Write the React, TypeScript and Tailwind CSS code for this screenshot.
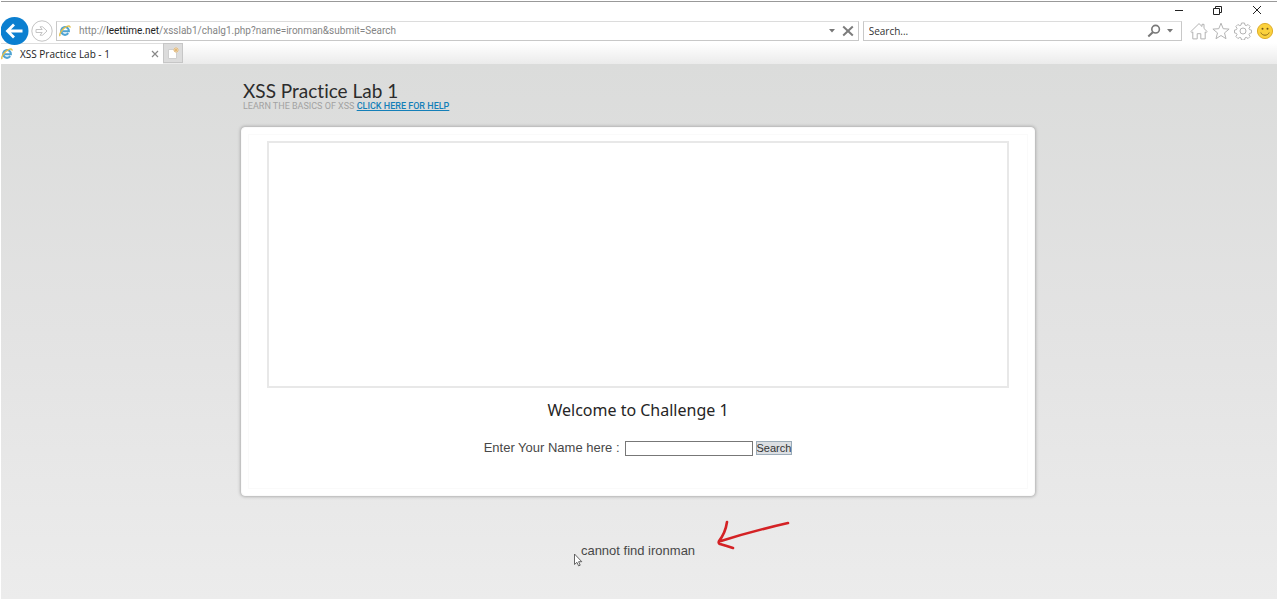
import React from "react";

function BrowserLogo() {
  return (
    <svg width="12" height="12" viewBox="0 0 12 12" aria-hidden="true" className="shrink-0">
      <path d="M9.2 8.2A3.9 3.9 0 1 1 9.9 6.3H3.4" fill="none" stroke="#4fa3d2" strokeWidth="2.1" />
      <path d="M1.1 11.2C-.4 9 3.6 3.3 8 1.4c2.2-.9 3.3-.4 3 1.3" fill="none" stroke="#e3c04a" strokeWidth="1.4" />
    </svg>
  );
}

function WindowControls() {
  return (
    <div className="flex h-[19px] items-end justify-end gap-[26px] pr-3 text-[#222]">
      <button aria-label="Minimize" className="flex h-4 w-3 items-center justify-center pb-1">
        <svg width="12" height="12" viewBox="0 0 12 12">
          <path d="M2 5.500h8" stroke="currentColor" />
        </svg>
      </button>
      <button aria-label="Restore" className="flex h-4 w-3 items-center justify-center pb-1">
        <svg width="12" height="12" viewBox="0 0 12 12" fill="none" stroke="currentColor">
          <path d="M2.500 3.500h6v6h-6zM4.500 3.500v-2h6v6h-2" />
        </svg>
      </button>
      <button aria-label="Close" className="flex h-4 w-4 items-center justify-center pb-1">
        <svg width="12" height="12" viewBox="0 0 12 12">
          <path d="m2 1 8 8M10 1l-8 8" stroke="currentColor" />
        </svg>
      </button>
    </div>
  );
}

function Toolbar() {
  return (
    <div className="flex h-[20px] items-center">
      <button aria-label="Back" className="relative z-10 h-[28px] w-[28px] shrink-0">
        <svg width="28" height="28" viewBox="0 0 28 28">
          <circle cx="13.5" cy="14" r="14" fill="#0b7fd0" />
          <path d="M21.500 14H7M13 7.500 6.500 14l6.500 6.500" fill="none" stroke="#fff" strokeWidth="2.800" />
        </svg>
      </button>
      <button aria-label="Forward" className="ml-[2px] h-[22px] w-[22px] shrink-0">
        <svg width="22" height="22" viewBox="0 0 22 22" fill="none" stroke="#c4c4c4">
          <circle cx="11" cy="11" r="10.200" fill="#fff" />
          <path d="M5 9.500h6.200L9 6.800h2.600l4.400 4.200-4.400 4.200H9l2.200-2.700H5z" />
        </svg>
      </button>
      <div className="ml-[3px] flex h-full min-w-0 flex-[803] items-center border border-[#c8c8c8] border-t-[#dcdcdc] bg-white pl-[2px]">
        <BrowserLogo />
        <div aria-label="Address" className="ml-2 min-w-0 flex-1 truncate font-['Roboto',sans-serif] text-[10px] leading-4 text-[#858585]">
          http://<span className="text-[#222]">leettime.net</span>/xsslab1/chalg1.php?name=ironman&amp;submit=Search
        </div>
        <button aria-label="Show address list" className="flex h-4 w-4 items-center justify-center">
          <svg width="6" height="4" viewBox="0 0 6 4"><path d="M0 0h6L3 3.500z" fill="#777" /></svg>
        </button>
        <button aria-label="Stop" className="mr-[2px] flex h-4 w-4 items-center justify-center">
          <svg width="12" height="12" viewBox="0 0 12 12"><path d="m1.200 1.500 9.600 9M10.800 1.500l-9.600 9" stroke="#7c7c7c" strokeWidth="2" /></svg>
        </button>
      </div>
      <div className="ml-1 flex h-full min-w-0 flex-[319] items-center border border-[#c8c8c8] border-t-[#dcdcdc] bg-white">
        <input
          aria-label="Search the web"
          placeholder="Search..."
          className="h-4 min-w-0 flex-1 bg-transparent pl-[5px] text-[10px] leading-4 outline-none placeholder:text-[#333]"
        />
        <button aria-label="Search" className="flex h-4 w-4 items-center justify-center">
          <svg width="14" height="14" viewBox="0 0 14 14" fill="none" stroke="#777">
            <circle cx="8.600" cy="5.200" r="3.800" strokeWidth="1.600" />
            <path d="M5.800 8.200 1.300 12.500" strokeWidth="2" />
          </svg>
        </button>
        <button aria-label="Search options" className="mr-[3px] flex h-4 w-4 items-center justify-center">
          <svg width="6" height="4" viewBox="0 0 6 4"><path d="M0 0h6L3 3.500z" fill="#777" /></svg>
        </button>
      </div>
      <div className="ml-2 flex shrink-0 items-center gap-1 pr-[3px]">
        <button aria-label="Home" className="h-[18px] w-[18px]">
          <svg width="18" height="18" viewBox="0 0 18 18" fill="none" stroke="#b3b3b3">
            <path d="m.8 9.600 8.200-8 3 2.900V2.300h2v4.200l3.200 3.100-1.100 1.100-.9-.8v7h-4.400v-5.200H7.200v5.200H2.800v-7l-.9.8z" />
          </svg>
        </button>
        <button aria-label="Favorites" className="h-[18px] w-[18px]">
          <svg width="18" height="18" viewBox="0 0 18 18" fill="none" stroke="#b3b3b3">
            <path d="m9 1.200 2.200 5.500 5.900.4-4.600 3.800 1.500 5.800L9 13.500l-5 3.200 1.500-5.800L.9 7.100l5.900-.4z" />
          </svg>
        </button>
        <button aria-label="Tools" className="h-[18px] w-[18px]">
          <svg width="18" height="18" viewBox="0 0 18 18" fill="none" stroke="#b3b3b3">
            <circle cx="9" cy="9" r="3" />
            <path d="M7.500 1h3l.5 2.100 1.200.5 1.900-1.100 2 2-1.100 1.900.5 1.200 2 .5v2.800l-2 .5-.5 1.200 1.100 1.900-2 2-1.900-1.100-1.200.5-.5 2.100h-3L7 15.900l-1.200-.5-1.900 1.100-2-2L3 12.600l-.5-1.200-2-.5V8.100l2-.5L3 6.400 1.900 4.500l2-2 1.900 1.100L7 3.100z" />
          </svg>
        </button>
        <button aria-label="Send a smile" className="h-[18px] w-[18px]">
          <svg width="18" height="18" viewBox="0 0 18 18">
            <circle cx="9" cy="9" r="7.600" fill="#fbd13c" stroke="#dfae2c" />
            <circle cx="6.500" cy="6.700" r="1" fill="#735618" />
            <circle cx="11.500" cy="6.700" r="1" fill="#735618" />
            <path d="M4.800 10.500c1.500 3.600 6.900 3.600 8.400 0" fill="none" stroke="#8c6a1d" />
          </svg>
        </button>
      </div>
    </div>
  );
}

function TabStrip() {
  return (
    <div className="mt-[2px] flex h-[21px] bg-linear-to-b from-white to-[#ebebeb]">
      <div className="flex w-[162px] items-center border-t border-[#dedede] bg-white">
        <BrowserLogo />
        <span className="ml-[7px] flex-1 text-[10px] leading-4 text-[#222]">XSS Practice Lab - 1</span>
        <button aria-label="Close tab" className="mr-[2px] flex h-3 w-3 items-center justify-center">
          <svg width="8" height="8" viewBox="0 0 8 8"><path d="m1 1 6 6M7 1 1 7" stroke="#888" strokeWidth="1.200" /></svg>
        </button>
      </div>
      <button aria-label="New tab" className="flex h-5 w-5 items-center justify-center border border-[#c6c6c6] bg-[#dcdcdc]">
        <svg width="12" height="12" viewBox="0 0 12 12">
          <path d="M1.500 2.500h5l3 3v6h-8z" fill="#fff" stroke="#cfcfcf" />
          <path d="M9 0v6M6 3h6M7 1l4 4M11 1 7 5" stroke="#eeb765" strokeWidth=".8" />
        </svg>
      </button>
    </div>
  );
}

function Annotation() {
  return (
    <svg width="76" height="34" viewBox="0 0 76 34" aria-hidden="true" className="absolute -top-[22px] left-full ml-[21px]">
      <path d="M72 4C50 9 27 15 5 22M11 3C10 10 7 17 3 22q-1 2 1 3 7 2 13 4" fill="none" stroke="#d42225" strokeWidth="2.600" strokeLinecap="round" strokeLinejoin="round" />
    </svg>
  );
}

function Pointer() {
  return (
    <svg width="10" height="14" viewBox="0 0 10 14" aria-hidden="true" className="absolute top-3 -left-2">
      <path d="M1.500 1v10.500l2.400-2.200 1.700 3.600 1.600-.7-1.600-3.500h3.200z" fill="#fff" stroke="#555" strokeWidth=".9" />
    </svg>
  );
}

export default function App() {
  return (
    <div className="flex min-h-screen flex-col bg-white px-px pb-px font-['Open_Sans','Noto_Sans',sans-serif]">
      <header className="mt-px border-t border-[#999]">
        <WindowControls />
        <Toolbar />
        <TabStrip />
      </header>
      <main className="flex-1 bg-linear-to-b from-[#dbdcdb] via-[#e3e3e3] to-[#ececec] pr-[18px] pl-4 font-['Liberation_Sans',Arial,sans-serif] text-[#484848]">
        <div className="mx-auto max-w-[794px] pt-[17px]">
          <div className="pl-[2px]">
            <h1 className="font-['Trebuchet_MS','Lato',sans-serif] text-[19px] leading-5 text-[#2c2c2c] [font-variant-ligatures:none]">
              XSS Practice Lab 1
            </h1>
            <p className="font-['Trebuchet_MS','Roboto',sans-serif] text-[9px] leading-[11px] text-[#a2a2a2]">
              LEARN THE BASICS OF XSS{" "}
              <a href="#help" className="font-medium text-[#147fb8] underline">CLICK HERE FOR HELP</a>
            </p>
          </div>
          <section className="mt-[15px] rounded-[4px] border border-[#fafafa] bg-white px-[25px] pt-[13px] pb-[37px] shadow-[0_0_3px_1px_#b0b0b0,inset_0_0_0_6px_#ffffff,inset_0_0_0_7px_#fafafa]">
            <div className="h-[247px] border-2 border-[#e8e8e8]" />
            <h2 className="mt-[10px] text-center font-['Trebuchet_MS','Noto_Sans',sans-serif] text-[16px] leading-6 text-[#252525]">
              Welcome to Challenge 1
            </h2>
            <form className="mt-4 flex items-center justify-center" onSubmit={(event) => event.preventDefault()}>
              <label htmlFor="visitor" className="text-[13px] leading-5">Enter Your Name here :</label>
              <input id="visitor" name="name" className="ml-[5px] h-[15px] w-32 border border-[#777] bg-white px-1 text-[11px] outline-none" />
              <button type="submit" className="ml-[3px] h-[14px] border border-[#9babb8] bg-[#dcdfe3] text-[11px] leading-3 text-[#333]">
                Search
              </button>
            </form>
          </section>
          <div className="mt-[45px] flex justify-center pb-8">
            <p className="relative text-[13px] leading-5">
              cannot find ironman
              <Pointer />
              <Annotation />
            </p>
          </div>
        </div>
      </main>
    </div>
  );
}
